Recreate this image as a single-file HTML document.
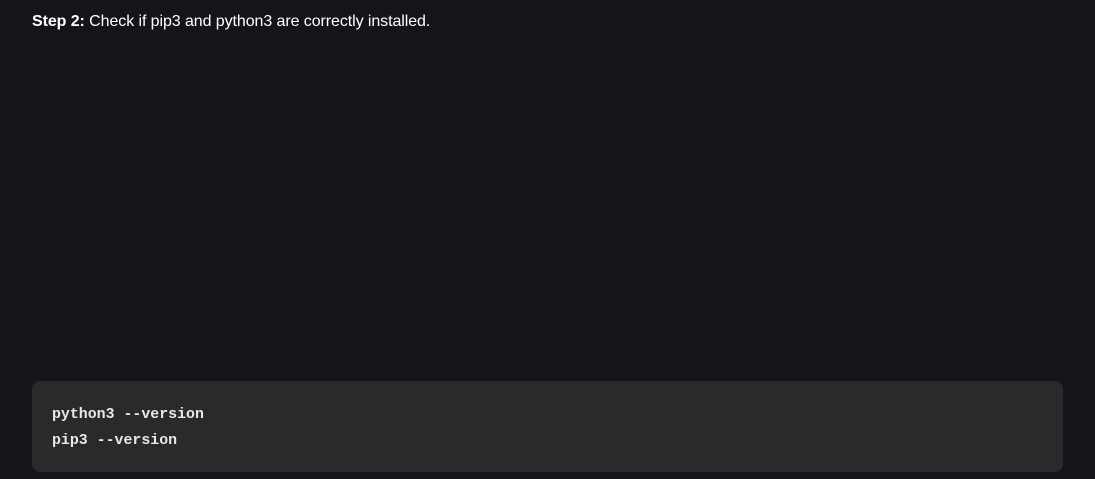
<!DOCTYPE html>
<html><head><style>
html,body{margin:0;padding:0;background:#141519;width:1095px;height:479px;overflow:hidden}
.t{position:absolute;left:32px;top:13px;font-family:"Liberation Sans",sans-serif;font-size:16px;color:#fff;letter-spacing:-0.08px;white-space:nowrap}
.box{position:absolute;left:32px;top:381px;width:1031px;height:91px;background:#2a2a2c;border-radius:8px}
pre{position:absolute;left:52px;top:402px;margin:0;font-family:"Liberation Mono",monospace;font-weight:bold;font-size:14.9px;line-height:26px;color:#e8e8e8}
</style></head><body>
<div class="t"><b>Step 2:</b> Check if pip3 and python3 are correctly installed.</div>
<div class="box"></div>
<pre>python3 --version
pip3 --version</pre>
</body></html>
